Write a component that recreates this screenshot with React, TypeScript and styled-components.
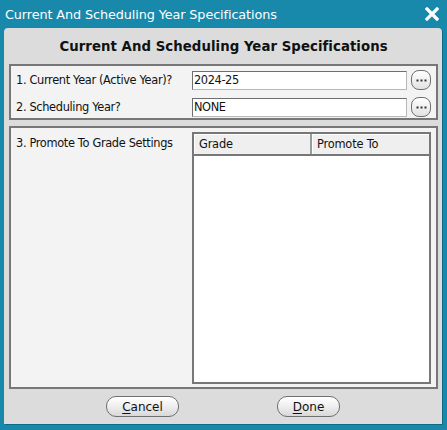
import * as React from 'react'
import styled, { createGlobalStyle } from 'styled-components'

const GlobalStyle = createGlobalStyle`
    html, body {
        margin: 0;
        padding: 0;
        background: #1889ab;
    }
    body {
        font-family: "DejaVu Sans", Verdana, sans-serif;
    }
`

export default function App() {
    return (
        <>
            <GlobalStyle />
            <Window>
                <TitleBar>
                    <TitleText>Current And Scheduling Year Specifications</TitleText>
                    <CloseIcon width="14" height="14" viewBox="0 0 14 14">
                        <path d="M2 2 L12 12 M12 2 L2 12" stroke="#fff" strokeWidth="3.2" strokeLinecap="square" />
                    </CloseIcon>
                </TitleBar>
                <Panel>
                    <Heading>Current And Scheduling Year Specifications</Heading>
                    <YearGroup>
                        <Label>1. Current Year (Active Year)?</Label>
                        <TextBox>2024-25</TextBox>
                        <LookupButton>
                            <Dots />
                        </LookupButton>
                        <Label>2. Scheduling Year?</Label>
                        <TextBox>NONE</TextBox>
                        <LookupButton>
                            <Dots />
                        </LookupButton>
                    </YearGroup>
                    <PromoteGroup>
                        <Label>3. Promote To Grade Settings</Label>
                        <Grid>
                            <GridHead>
                                <HeadCell>Grade</HeadCell>
                                <HeadCell>Promote To</HeadCell>
                            </GridHead>
                            <GridBody />
                        </Grid>
                    </PromoteGroup>
                    <ButtonRow>
                        <PillButton $width={73}>
                            <u>C</u>ancel
                        </PillButton>
                        <PillButton $width={63}>
                            <u>D</u>one
                        </PillButton>
                    </ButtonRow>
                </Panel>
            </Window>
        </>
    )
}

function Dots() {
    return (
        <svg width="11" height="3" viewBox="0 0 11 3">
            <rect x="0.5" y="0.5" width="2" height="2" fill="#333" />
            <rect x="4.5" y="0.5" width="2" height="2" fill="#333" />
            <rect x="8.5" y="0.5" width="2" height="2" fill="#333" />
        </svg>
    )
}

const Window = styled.div`
    display: flex;
    flex-direction: column;
    height: 430px;
    width: 447px;
    box-sizing: border-box;
`
const TitleBar = styled.div`
    display: flex;
    align-items: center;
    justify-content: space-between;
    height: 28px;
    padding: 0 8px 0 5px;
    color: #fff;
`
const TitleText = styled.div`
    font-size: 12.8px;
    letter-spacing: -0.1px;
`
const CloseIcon = styled.svg`
    display: block;
`
const Panel = styled.div`
    flex: 1;
    display: flex;
    flex-direction: column;
    margin: 0 5px 6px 4px;
    padding: 0 4px 0 5px;
    background: #dcdcdc;
    border-radius: 4px 4px 0 0;
    box-shadow: 1px 1px 0 #0e6a86;
`
const Heading = styled.div`
    height: 36px;
    display: flex;
    align-items: center;
    justify-content: center;
    font-weight: bold;
    font-size: 13.3px;
    letter-spacing: 0.05px;
    color: #111;
`
const Group = styled.div`
    border: 2px solid #777;
    background: #f3f3f3;
    box-sizing: border-box;
`
const YearGroup = styled(Group)`
    display: grid;
    grid-template-columns: 176px 215px 20px;
    row-gap: 7px;
    align-items: center;
    padding: 4px 4px 3px 5px;
    height: 56px;
`
const Label = styled.div`
    font-size: 11.4px;
    letter-spacing: -0.35px;
    color: #111;
    white-space: nowrap;
`
const TextBox = styled.div`
    height: 19px;
    box-sizing: border-box;
    background: #fff;
    border: 1px solid #b8b8b8;
    border-top-color: #6f6f6f;
    border-left-color: #6f6f6f;
    font-size: 11.4px;
    letter-spacing: -0.4px;
    line-height: 17px;
    padding-left: 1px;
    color: #111;
`
const LookupButton = styled.div`
    width: 20px;
    height: 20px;
    margin-left: 4px;
    box-sizing: border-box;
    border: 1px solid #707070;
    border-radius: 8px;
    background: linear-gradient(#ffffff, #e2e2e2);
    display: flex;
    align-items: center;
    justify-content: center;
`
const PromoteGroup = styled(Group)`
    margin-top: 6px;
    height: 263px;
    display: grid;
    grid-template-columns: 176px 1fr;
    align-items: start;
    padding: 4px 5px 3px 5px;
    ${Label} {
        padding-top: 4px;
    }
`
const Grid = styled.div`
    border: 2px solid #777;
    height: 252px;
    box-sizing: border-box;
    background: #fff;
    display: flex;
    flex-direction: column;
`
const GridHead = styled.div`
    display: grid;
    grid-template-columns: 118px 1fr;
    height: 20px;
    border-bottom: 2px solid #777;
    background: #efefef;
`
const HeadCell = styled.div`
    font-size: 11.4px;
    letter-spacing: -0.2px;
    line-height: 20px;
    padding-left: 5px;
    color: #111;
    border-right: 2px solid #9a9a9a;
    box-shadow: inset 1px 1px 0 #fff;
    &:last-child {
        border-right: none;
    }
`
const GridBody = styled.div`
    flex: 1;
    background: #fff;
`
const ButtonRow = styled.div`
    flex: 1;
    display: flex;
    align-items: center;
    padding-left: 97px;
    gap: 98px;
`
const PillButton = styled.div<{ $width: number }>`
    width: ${p => p.$width}px;
    height: 21px;
    box-sizing: border-box;
    border: 1px solid #6f6f6f;
    border-radius: 10px;
    background: linear-gradient(#ffffff 0%, #f0f0f0 45%, #d8d8d8 100%);
    display: flex;
    align-items: center;
    justify-content: center;
    font-size: 12px;
    color: #111;
    u {
        text-decoration-thickness: 1px;
        text-underline-offset: 2px;
    }
`
